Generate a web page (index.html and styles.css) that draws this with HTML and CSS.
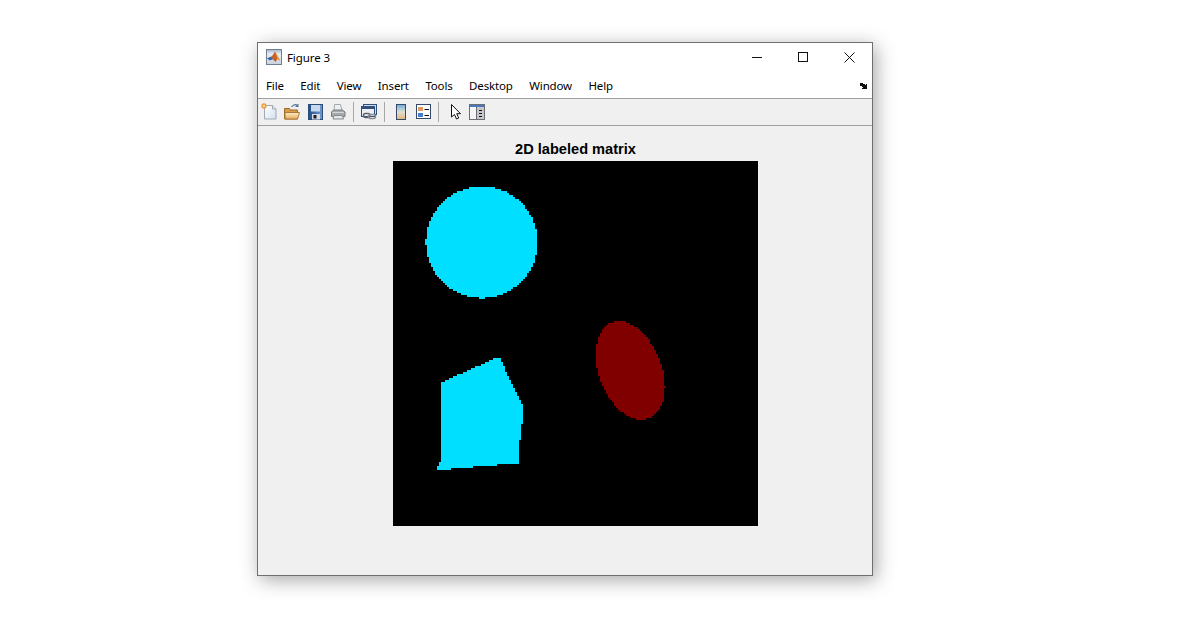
FILE: index.html
```html
<!DOCTYPE html>
<html lang="en">
<head>
	<meta charset="UTF-8">
	<title>Figure 3</title>
	<link rel="stylesheet" href="styles.css">
	<script src="matrix.js"></script>
</head>
<body>
	<div class="window">
		<div class="titlebar">
			<svg class="app-icon" width="16" height="16" viewBox="0 0 16 16">
				<defs>
					<linearGradient id="appframe" x1="0" y1="0" x2="0" y2="1">
						<stop offset="0" stop-color="#9fb4cb"/>
						<stop offset="0.300" stop-color="#e8edf2"/>
						<stop offset="1" stop-color="#c9d3dd"/>
					</linearGradient>
				</defs>
				<rect x="0.500" y="0.500" width="15" height="15" fill="url(#appframe)" stroke="#6f7f90"/>
				<path d="M1 9.500l3.500-1.500 2-1.500 2.500-4 2 3.500 3 5.500-2.500-1.500-2 3-3-3z" fill="#c8622a"/>
				<path d="M1 9.500l3.500-1.500 2.500 2-3 1.500z" fill="#2f64ad"/>
				<path d="M9 2.500l2 3.500 3 5.500-2.500-1.500z" fill="#eba23c"/>
			</svg>
			<span class="title-text">Figure 3</span>
			<div class="controls">
				<div class="control">
					<svg width="10" height="10" viewBox="0 0 10 10"><path d="M0 5.500h10" stroke="#111" fill="none"/></svg>
				</div>
				<div class="control">
					<svg width="10" height="10" viewBox="0 0 10 10"><rect x="0.500" y="0.500" width="9" height="9" stroke="#111" fill="none"/></svg>
				</div>
				<div class="control">
					<svg width="11" height="11" viewBox="0 0 11 11"><path d="M0.500 0.500l10 10M10.500 0.500l-10 10" stroke="#111" fill="none"/></svg>
				</div>
			</div>
		</div>
		<div class="menubar">
			<span class="menu-item">File</span>
			<span class="menu-item">Edit</span>
			<span class="menu-item">View</span>
			<span class="menu-item">Insert</span>
			<span class="menu-item">Tools</span>
			<span class="menu-item">Desktop</span>
			<span class="menu-item">Window</span>
			<span class="menu-item">Help</span>
			<svg class="dock-arrow" width="8" height="6" viewBox="0 0 8 6">
				<path d="M0 0h3v1h2v1h1v-1h1v5h-5v-1h1v-1h-1v-1h-2v-1h-1z" fill="#111"/>
			</svg>
		</div>
		<div class="toolbar">
			<!-- new -->
			<svg class="tool" width="16" height="17" viewBox="0 0 16 17">
				<defs>
					<linearGradient id="docfill" x1="0" y1="0" x2="1" y2="1">
						<stop offset="0" stop-color="#fff"/>
						<stop offset="1" stop-color="#d3e0ee"/>
					</linearGradient>
				</defs>
				<path d="M3.500 2.500h8l3.500 3.500v10h-11.500z" fill="url(#docfill)" stroke="#9fa9b5"/>
				<path d="M11.500 2.500v3.500h3.500" fill="#e6edf5" stroke="#9fa9b5"/>
				<circle cx="3" cy="3" r="2.700" fill="#ee9f45"/>
				<circle cx="3" cy="3" r="1.100" fill="#fbe6b8"/>
			</svg>
			<!-- open -->
			<svg class="tool" width="16" height="17" viewBox="0 0 16 17">
				<defs>
					<linearGradient id="folderfill" x1="0" y1="0" x2="0" y2="1">
						<stop offset="0" stop-color="#fdeec8"/>
						<stop offset="1" stop-color="#e9ac5c"/>
					</linearGradient>
				</defs>
				<path d="M0.500 5.500h5l1 1.500h7v9h-13z" fill="#d99a4a" stroke="#9c6a2b"/>
				<path d="M1 9.500h14.500l-2 6.500h-12.500z" fill="url(#folderfill)" stroke="#ad7a35"/>
				<path d="M7.500 4c1.800-2.500 4-3 6-1.800" fill="none" stroke="#54708f" stroke-width="1.200"/>
				<path d="M14.500 0.500v3.500h-3.500z" fill="#54708f"/>
			</svg>
			<!-- save -->
			<svg class="tool" width="16" height="17" viewBox="0 0 16 17">
				<defs>
					<linearGradient id="diskfill" x1="0" y1="0" x2="1" y2="0">
						<stop offset="0" stop-color="#1f4a8c"/>
						<stop offset="1" stop-color="#6f9fd6"/>
					</linearGradient>
				</defs>
				<rect x="1.500" y="1.500" width="14" height="15" fill="url(#diskfill)" stroke="#2c4a78"/>
				<rect x="4" y="2" width="9" height="6.500" fill="#c9d9ec"/>
				<rect x="5" y="11" width="8" height="5.500" fill="#d8dbe0"/>
				<rect x="6.500" y="12" width="3" height="3.500" fill="#1c1c1c"/>
			</svg>
			<!-- print -->
			<svg class="tool" width="16" height="17" viewBox="0 0 16 17">
				<path d="M4.500 1.500h6l1.500 6h-8z" fill="#eef1f4" stroke="#a3a8ad"/>
				<path d="M1.500 9l2-2h9l2.500 2v4.500h-13.500z" fill="#a5a9ae" stroke="#787c81"/>
				<path d="M4 12.500h8.500l1 3.500h-10.500z" fill="#e4e6e8" stroke="#85898d"/>
				<rect x="2.500" y="9" width="11.500" height="1" fill="#d4d6d8"/>
			</svg>
			<span class="sep first-sep"></span>
			<!-- link -->
			<svg class="tool" width="16" height="17" viewBox="0 0 16 17">
				<rect x="2.500" y="1.500" width="13" height="10" fill="#cfdceb" stroke="#2f4f7c"/>
				<rect x="0.500" y="3.500" width="13" height="10" fill="#eaf0f6" stroke="#2f4f7c"/>
				<rect x="1" y="4" width="12" height="2" fill="#2f4f7c"/>
				<rect x="2.500" y="10.500" width="6.500" height="4" rx="2" fill="none" stroke="#5f6368" stroke-width="1.500"/>
				<rect x="7.500" y="11.500" width="7" height="4" rx="2" fill="none" stroke="#8a8e93" stroke-width="1.500"/>
			</svg>
			<span class="sep"></span>
			<!-- colorbar -->
			<svg class="tool colorbar" width="11" height="17" viewBox="0 0 11 17">
				<defs>
					<linearGradient id="barfill" x1="0" y1="0" x2="0" y2="1">
						<stop offset="0" stop-color="#6ea8dd"/>
						<stop offset="0.500" stop-color="#dfe0d0"/>
						<stop offset="1" stop-color="#dfb678"/>
					</linearGradient>
				</defs>
				<rect x="1.500" y="1.500" width="9" height="15" fill="url(#barfill)" stroke="#34496b"/>
			</svg>
			<!-- legend -->
			<svg class="tool" width="16" height="17" viewBox="0 0 16 17">
				<rect x="1.500" y="1.500" width="14" height="14" fill="#fbfbfb" stroke="#34496b"/>
				<rect x="3" y="4" width="5" height="4" fill="#dc9a5c"/>
				<rect x="3" y="10" width="5" height="4" fill="#4a7bc8"/>
				<path d="M9.500 6.500h4.500M9.500 12.500h4.500" stroke="#111"/>
			</svg>
			<span class="sep"></span>
			<!-- cursor -->
			<svg class="tool cursor" width="10" height="17" viewBox="0 0 10 17">
				<path d="M0.500 1.500v12.500l3-2.500 2 4.500 2.200-1-2-4.300h3.800z" fill="#fff" stroke="#111"/>
			</svg>
			<!-- panel -->
			<svg class="tool" width="16" height="17" viewBox="0 0 16 17">
				<rect x="0.500" y="1.500" width="15" height="15" fill="#f6f6f6" stroke="#6b6f75"/>
				<rect x="1" y="2" width="14" height="2" fill="#4a78b8"/>
				<rect x="8" y="4" width="7" height="12" fill="#c5c7ca"/>
				<path d="M7.500 4v12" stroke="#6b6f75"/>
				<path d="M10 7.500h3M10 10.500h3M10 13.500h3" stroke="#111"/>
			</svg>
		</div>
		<div class="figure">
			<div class="plot-title">2D labeled matrix</div>
			<canvas id="matrix" class="axes" width="182" height="182"></canvas>
		</div>
	</div>
</body>
</html>
```

FILE: matrix.js
```js
window.onload=function(){
	var oCanvas=document.getElementById('matrix');
	var ctx=oCanvas.getContext('2d');
	// shapes are given in screen pixels, one matrix cell is about 2px
	var size=oCanvas.width;
	var left=393, top=161, cell=365/size;
	var pent=[[499.7,356],[503,363],[509,378],[517,392],[521,402],[523.5,404],[523.5,415],[520.5,437],[518.5,463],[437.5,470],[439,462],[441,460],[441,382]];

	function inPent(x,y){
		var inside=false;
		for(var i=0,j=pent.length-1;i<pent.length;j=i++){
			var a=pent[i], b=pent[j];
			if((a[1]>y)!=(b[1]>y) && x<(b[0]-a[0])*(y-a[1])/(b[1]-a[1])+a[0]){
				inside=!inside;
			}
		}
		return inside;
	}
	function inCircle(x,y){
		var dx=x-482, dy=y-242.5;
		return dx*dx+dy*dy<=56*56;
	}
	function inEllipse(x,y){
		var a=-21.5*Math.PI/180;
		var dx=x-630, dy=y-370.5;
		var u=dx*Math.cos(a)+dy*Math.sin(a);
		var v=-dx*Math.sin(a)+dy*Math.cos(a);
		return u*u/(31.5*31.5)+v*v/(51*51)<=1;
	}

	ctx.fillStyle='#000';
	ctx.fillRect(0,0,size,size);
	for(var r=0;r<size;r++){
		for(var c=0;c<size;c++){
			var x=left+(c+0.5)*cell;
			var y=top+(r+0.5)*cell;
			if(inCircle(x,y)||inPent(x,y)){
				ctx.fillStyle='#00dfff';
				ctx.fillRect(c,r,1,1);
			}else if(inEllipse(x,y)){
				ctx.fillStyle='#800000';
				ctx.fillRect(c,r,1,1);
			}
		}
	}
}
```

FILE: styles.css
```css
*{
	margin:0px;
	padding:0px;
	box-sizing:border-box;
}
html,body{
	height:100%;
}
body{
	background:#fff;
	font-family:"Noto Sans","Liberation Sans",sans-serif;
	padding:42px 0px 0px 257px;
}
.window{
	width:616px;
	height:534px;
	border:1px solid #6f6f6f;
	background:#f0f0f0;
	box-shadow:3px 4px 18px rgba(0,0,0,0.35);
	display:flex;
	flex-direction:column;
}
.titlebar{
	height:30px;
	background:#fff;
	display:flex;
	align-items:center;
	padding:0px 0px 2px 8px;
}
.app-icon{
	margin-right:5px;
}
.title-text{
	font-size:11.5px;
	letter-spacing:-0.1px;
	color:#000;
}
.controls{
	margin-left:auto;
	display:flex;
}
.control{
	width:46px;
	height:28px;
	display:flex;
	align-items:center;
	justify-content:center;
}
.menubar{
	height:25px;
	background:#fff;
	display:flex;
	align-items:center;
	padding:0px 0px 1px 8px;
	gap:16.5px;
	position:relative;
}
.menu-item{
	font-size:11.5px;
	letter-spacing:-0.15px;
	color:#000;
}
.dock-arrow{
	position:absolute;
	right:4px;
	top:10px;
}
.toolbar{
	height:28px;
	border-top:1px solid #a0a0a0;
	border-bottom:1px solid #a0a0a0;
	background:#f0f0f0;
	display:flex;
	align-items:center;
	padding:0px 0px 1px 3px;
}
.tool{
	margin-right:7px;
	flex:none;
}
.sep{
	width:1px;
	height:20px;
	background:#a8a8a8;
	margin:1px 7px 0px 0px;
}
.colorbar{
	margin-left:3px;
	margin-right:9px;
}
.cursor{
	margin-left:5px;
	margin-right:8px;
}
.figure{
	flex:1;
	padding:14px 0px 0px 135px;
}
.plot-title{
	width:365px;
	height:21px;
	text-align:center;
	font-family:"Liberation Sans",Arial,sans-serif;
	font-weight:bold;
	font-size:14.6px;
	line-height:18px;
	color:#000;
}
.axes{
	display:block;
	width:365px;
	height:365px;
	image-rendering:pixelated;
}
```
